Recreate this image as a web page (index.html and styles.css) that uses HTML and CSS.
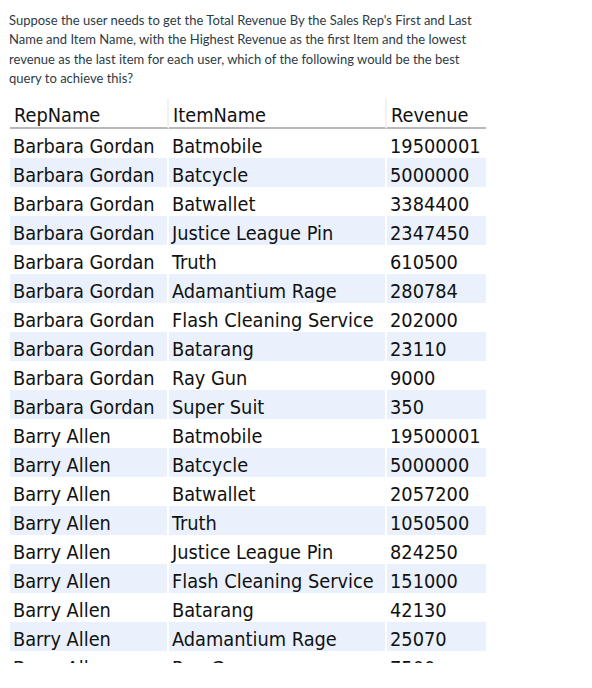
FILE: index.html
```html
<!DOCTYPE html>
<html>
<head>
<meta charset="utf-8">
<link rel="stylesheet" href="styles.css">
</head>
<body>
<div class="page">
  <p class="question">Suppose the user needs to get the Total Revenue By the Sales Rep's First and Last<br>Name and Item Name, with the Highest Revenue as the first Item and the lowest<br>revenue as the last item for each user, which of the following would be the best<br>query to achieve this?</p>
  <div class="result">
    <div class="grid">
      <div class="hd">RepName</div><div class="hd">ItemName</div><div class="hd last">Revenue</div>
      <div class="c">Barbara Gordan</div><div class="c">Batmobile</div><div class="c">19500001</div>
      <div class="c alt">Barbara Gordan</div><div class="c alt">Batcycle</div><div class="c alt">5000000</div>
      <div class="c">Barbara Gordan</div><div class="c">Batwallet</div><div class="c">3384400</div>
      <div class="c alt">Barbara Gordan</div><div class="c alt">Justice League Pin</div><div class="c alt">2347450</div>
      <div class="c">Barbara Gordan</div><div class="c">Truth</div><div class="c">610500</div>
      <div class="c alt">Barbara Gordan</div><div class="c alt">Adamantium Rage</div><div class="c alt">280784</div>
      <div class="c">Barbara Gordan</div><div class="c">Flash Cleaning Service</div><div class="c">202000</div>
      <div class="c alt">Barbara Gordan</div><div class="c alt">Batarang</div><div class="c alt">23110</div>
      <div class="c">Barbara Gordan</div><div class="c">Ray Gun</div><div class="c">9000</div>
      <div class="c alt">Barbara Gordan</div><div class="c alt">Super Suit</div><div class="c alt">350</div>
      <div class="c">Barry Allen</div><div class="c">Batmobile</div><div class="c">19500001</div>
      <div class="c alt">Barry Allen</div><div class="c alt">Batcycle</div><div class="c alt">5000000</div>
      <div class="c">Barry Allen</div><div class="c">Batwallet</div><div class="c">2057200</div>
      <div class="c alt">Barry Allen</div><div class="c alt">Truth</div><div class="c alt">1050500</div>
      <div class="c">Barry Allen</div><div class="c">Justice League Pin</div><div class="c">824250</div>
      <div class="c alt">Barry Allen</div><div class="c alt">Flash Cleaning Service</div><div class="c alt">151000</div>
      <div class="c">Barry Allen</div><div class="c">Batarang</div><div class="c">42130</div>
      <div class="c alt">Barry Allen</div><div class="c alt">Adamantium Rage</div><div class="c alt">25070</div>
      <div class="c">Barry Allen</div><div class="c">Ray Gun</div><div class="c">7500</div>
    </div>
  </div>
</div>
</body>
</html>
```
FILE: styles.css
```css
html, body {
  margin: 0;
  padding: 0;
  background: #ffffff;
}
.page {
  padding: 11px 0 0 9px;
}
.question {
  margin: 0;
  font-family: Lato, "Open Sans", sans-serif;
  font-size: 13px;
  line-height: 19.3px;
  color: #2d3b45;
}
.result {
  margin: 10px 0 0 1px;
  width: 476px;
  height: 565px;
  overflow: hidden;
}
.grid {
  display: grid;
  grid-template-columns: 157px 216px 99px;
  column-gap: 2px;
  font-family: "DejaVu Sans Condensed", "DejaVu Sans", sans-serif;
  font-size: 19.8px;
  color: #111111;
}
.hd {
  height: 29px;
  line-height: 35px;
  padding-left: 4px;
  border-bottom: 2px solid #b8b8b8;
  margin-right: -2px;
  border-right: 2px solid #f2f2f2;
}
.hd.last {
  margin-right: 0;
  border-right: 0;
}
.c {
  height: 29px;
  line-height: 35px;
  padding-left: 3px;
  white-space: nowrap;
  overflow: hidden;
}
.c.alt {
  background: #eaf1fc;
}
```
